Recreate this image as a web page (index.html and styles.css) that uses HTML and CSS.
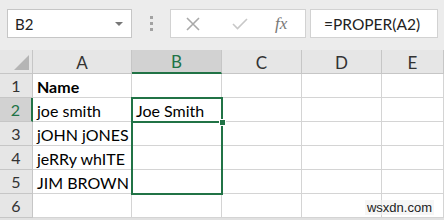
FILE: index.html
```html
<!DOCTYPE html>
<html lang="en">
<head>
    <meta charset="UTF-8">
    <title>PROPER</title>
    <link rel="stylesheet" href="styles.css">
</head>
<body>

<div class="formula-bar">
    <div class="name-box">
        <span>B2</span>
        <span class="drop"></span>
    </div>
    <div class="grip">
        <i></i><i></i><i></i>
    </div>
    <div class="fn-box">
        <svg class="icon-x" width="14" height="14" viewBox="0 0 14 14">
            <path d="M1 1 L13 13 M13 1 L1 13" stroke="#a9a9a9" stroke-width="1.6" fill="none"/>
        </svg>
        <svg class="icon-ok" width="16" height="12" viewBox="0 0 16 12">
            <path d="M1 6 L5.5 10.5 L15 1" stroke="#c8c8c8" stroke-width="1.6" fill="none"/>
        </svg>
        <span class="fx">fx</span>
    </div>
    <div class="formula">=PROPER(A2)</div>
</div>

<div class="sheet">
    <div class="hd corner"><span class="tri"></span></div>
    <div class="hd col">A</div>
    <div class="hd col sel">B</div>
    <div class="hd col">C</div>
    <div class="hd col">D</div>
    <div class="hd col">E</div>

    <div class="hd row">1</div>
    <div class="cell bold">Name</div>
    <div class="cell"></div><div class="cell"></div><div class="cell"></div><div class="cell"></div>

    <div class="hd row sel">2</div>
    <div class="cell">joe smith</div>
    <div class="cell">Joe Smith</div>
    <div class="cell"></div><div class="cell"></div><div class="cell"></div>

    <div class="hd row">3</div>
    <div class="cell">jOHN jONES</div>
    <div class="cell"></div><div class="cell"></div><div class="cell"></div><div class="cell"></div>

    <div class="hd row">4</div>
    <div class="cell">jeRRy whITE</div>
    <div class="cell"></div><div class="cell"></div><div class="cell"></div><div class="cell"></div>

    <div class="hd row">5</div>
    <div class="cell">JIM BROWN</div>
    <div class="cell"></div><div class="cell"></div><div class="cell"></div><div class="cell"></div>

    <div class="hd row">6</div>
    <div class="cell"></div>
    <div class="cell"></div><div class="cell"></div><div class="cell"></div><div class="cell"></div>

    <!-- selection outline B2:B5 -->
    <div class="selection"></div>
    <div class="active-line"></div>
    <div class="handle"></div>

    <div class="watermark">wsxdn.com</div>
</div>

</body>
</html>
```

FILE: styles.css
```css
body {
    margin: 0;
    width: 444px;
    height: 220px;
    overflow: hidden;
    background-color: #e1e1e1;
    font-family: Lato, "Liberation Sans", Arial, sans-serif;
    color: #000;
}

.formula-bar {
    display: flex;
    height: 50px;
    box-sizing: border-box;
    padding: 9px 6px 12px 7px;
    background-color: #ececec;
}

.name-box {
    width: 125px;
    display: flex;
    align-items: center;
    justify-content: space-between;
    box-sizing: border-box;
    padding: 0 8px 0 7px;
    background: #fff;
    border: 1px solid #c6c6c6;
    font-size: 15px;
    color: #222;
}

.drop {
    width: 0;
    height: 0;
    border-left: 4px solid transparent;
    border-right: 4px solid transparent;
    border-top: 4px solid #777;
}

.grip {
    width: 38px;
    display: flex;
    flex-direction: column;
    align-items: center;
    justify-content: center;
    gap: 3px;
}

.grip i {
    display: block;
    width: 3px;
    height: 3px;
    background: #a2a2a2;
}

.fn-box {
    width: 136px;
    display: flex;
    align-items: center;
    box-sizing: border-box;
    background: #fff;
    border: 1px solid #d2d2d2;
}

.icon-x {
    margin-left: 15px;
}

.icon-ok {
    margin-left: 32px;
}

.fx {
    margin-left: 27px;
    font-family: "Liberation Serif", serif;
    font-style: italic;
    font-size: 17px;
    color: #777;
}

.formula {
    width: 128px;
    margin-left: 4px;
    display: flex;
    align-items: center;
    box-sizing: border-box;
    padding-left: 13px;
    background: #fff;
    border: 1px solid #d2d2d2;
    font-size: 15.5px;
    color: #222;
}

.sheet {
    position: relative;
    display: grid;
    grid-template-columns: 33px 99px 90px 80px 80px 62px;
    grid-auto-rows: 24px;
    background: #fff;
}

.hd {
    box-sizing: border-box;
    background-color: #e6e6e6;
    border-right: 1px solid #c6c6c6;
    border-bottom: 1px solid #c6c6c6;
    color: #333;
    font-size: 16px;
    display: flex;
    align-items: center;
    justify-content: center;
}

.hd.col {
    font-size: 17px;
    padding-top: 1px;
}

.hd.sel {
    background-color: #d2d2d2;
    color: #217346;
}

.hd.col.sel {
    border-bottom: 2px solid #217346;
}

.hd.row.sel {
    border-right: 2px solid #217346;
}

.corner {
    position: relative;
}

.tri {
    position: absolute;
    right: 3px;
    bottom: 3px;
    width: 0;
    height: 0;
    border-left: 15px solid transparent;
    border-bottom: 15px solid #b5b5b5;
}

.cell {
    box-sizing: border-box;
    border-right: 1px solid #d4d4d4;
    border-bottom: 1px solid #d4d4d4;
    padding: 1px 0 0 4px;
    font-size: 16px;
    white-space: nowrap;
    display: flex;
    align-items: center;
}

.cell.bold {
    font-weight: bold;
}

.selection {
    position: absolute;
    left: 131px;
    top: 47px;
    width: 92px;
    height: 98px;
    box-sizing: border-box;
    border: 2px solid #217346;
}

.active-line {
    position: absolute;
    left: 131px;
    top: 71px;
    width: 92px;
    height: 2px;
    background: #217346;
}

.handle {
    position: absolute;
    left: 219px;
    top: 69px;
    width: 5px;
    height: 5px;
    background: #217346;
    border: 1px solid #fff;
}

.watermark {
    position: absolute;
    right: 10px;
    bottom: 3px;
    font-family: "Liberation Sans", Arial, sans-serif;
    font-size: 13px;
    color: #222;
    background: rgba(240, 240, 240, 0.6);
    padding: 0 2px;
}
```
